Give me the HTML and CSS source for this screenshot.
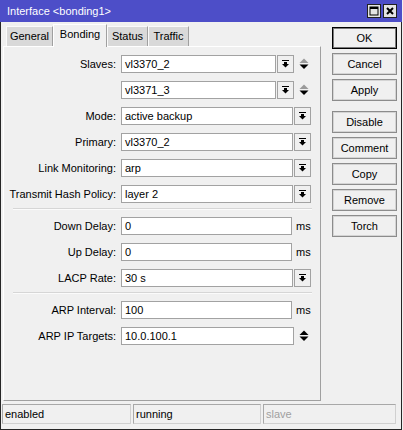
FILE: index.html
```html
<!DOCTYPE html>
<html>
<head>
<meta charset="utf-8">
<title>Interface &lt;bonding1&gt;</title>
<link rel="stylesheet" href="styles.css">
</head>
<body>
<div class="window">
  <div class="titlebar">
    <span class="title">Interface &lt;bonding1&gt;</span>
    <div class="tbtns">
      <span class="tbtn"><svg width="10" height="10" viewBox="0 0 10 10"><rect x="1" y="1" width="8" height="8" fill="none" stroke="#000" stroke-width="1"/><rect x="1" y="1" width="8" height="2" fill="#000"/></svg></span>
      <span class="tbtn"><svg width="10" height="10" viewBox="0 0 10 10"><path d="M2 2 L8 8 M8 2 L2 8" stroke="#000" stroke-width="2"/></svg></span>
    </div>
  </div>
  <div class="frame">
    <div class="main">
      <div class="left">
        <div class="tabs">
          <div class="tab t-general">General</div>
          <div class="tab t-bonding active">Bonding</div>
          <div class="tab t-status">Status</div>
          <div class="tab t-traffic">Traffic</div>
        </div>
        <div class="panel">
          <div class="group">
            <div class="row">
              <span class="label">Slaves:</span>
              <span class="input w-slave">vl3370_2</span>
              <span class="dd"><svg width="7" height="8" viewBox="0 0 7 8"><rect x="0" y="0" width="7" height="1" fill="#000"/><rect x="2" y="2" width="3" height="2" fill="#000"/><path d="M0 4 L7 4 L3.5 7.5 Z" fill="#000"/></svg></span>
              <span class="updown"><svg width="10" height="12" viewBox="0 0 10 12"><path d="M0.5 5 L9.5 5 L5 0.5 Z" fill="#9a9a9a"/><path d="M0.5 6.5 L9.5 6.5 L5 11 Z" fill="#000"/></svg></span>
            </div>
            <div class="row">
              <span class="label"></span>
              <span class="input w-slave">vl3371_3</span>
              <span class="dd"><svg width="7" height="8" viewBox="0 0 7 8"><rect x="0" y="0" width="7" height="1" fill="#000"/><rect x="2" y="2" width="3" height="2" fill="#000"/><path d="M0 4 L7 4 L3.5 7.5 Z" fill="#000"/></svg></span>
              <span class="updown"><svg width="10" height="12" viewBox="0 0 10 12"><path d="M0.5 5 L9.5 5 L5 0.5 Z" fill="#9a9a9a"/><path d="M0.5 6.5 L9.5 6.5 L5 11 Z" fill="#000"/></svg></span>
            </div>
            <div class="row">
              <span class="label">Mode:</span>
              <span class="input w-combo">active backup</span>
              <span class="dd"><svg width="7" height="8" viewBox="0 0 7 8"><rect x="0" y="0" width="7" height="1" fill="#000"/><rect x="2" y="2" width="3" height="2" fill="#000"/><path d="M0 4 L7 4 L3.5 7.5 Z" fill="#000"/></svg></span>
            </div>
            <div class="row">
              <span class="label">Primary:</span>
              <span class="input w-combo">vl3370_2</span>
              <span class="dd"><svg width="7" height="8" viewBox="0 0 7 8"><rect x="0" y="0" width="7" height="1" fill="#000"/><rect x="2" y="2" width="3" height="2" fill="#000"/><path d="M0 4 L7 4 L3.5 7.5 Z" fill="#000"/></svg></span>
            </div>
            <div class="row">
              <span class="label">Link Monitoring:</span>
              <span class="input w-combo">arp</span>
              <span class="dd"><svg width="7" height="8" viewBox="0 0 7 8"><rect x="0" y="0" width="7" height="1" fill="#000"/><rect x="2" y="2" width="3" height="2" fill="#000"/><path d="M0 4 L7 4 L3.5 7.5 Z" fill="#000"/></svg></span>
            </div>
            <div class="row">
              <span class="label">Transmit Hash Policy:</span>
              <span class="input w-combo">layer 2</span>
              <span class="dd"><svg width="7" height="8" viewBox="0 0 7 8"><rect x="0" y="0" width="7" height="1" fill="#000"/><rect x="2" y="2" width="3" height="2" fill="#000"/><path d="M0 4 L7 4 L3.5 7.5 Z" fill="#000"/></svg></span>
            </div>
          </div>
          <div class="sep"></div>
          <div class="group">
            <div class="row">
              <span class="label">Down Delay:</span>
              <span class="input w-ms">0</span>
              <span class="unit">ms</span>
            </div>
            <div class="row">
              <span class="label">Up Delay:</span>
              <span class="input w-ms">0</span>
              <span class="unit">ms</span>
            </div>
            <div class="row">
              <span class="label">LACP Rate:</span>
              <span class="input w-combo">30 s</span>
              <span class="dd"><svg width="7" height="8" viewBox="0 0 7 8"><rect x="0" y="0" width="7" height="1" fill="#000"/><rect x="2" y="2" width="3" height="2" fill="#000"/><path d="M0 4 L7 4 L3.5 7.5 Z" fill="#000"/></svg></span>
            </div>
          </div>
          <div class="sep sep2"></div>
          <div class="group">
            <div class="row">
              <span class="label">ARP Interval:</span>
              <span class="input w-ms">100</span>
              <span class="unit">ms</span>
            </div>
            <div class="row">
              <span class="label">ARP IP Targets:</span>
              <span class="input w-ip">10.0.100.1</span>
              <span class="updown ud-ip"><svg width="10" height="12" viewBox="0 0 10 12"><path d="M0.5 5 L9.5 5 L5 0.5 Z" fill="#000"/><path d="M0.5 6.5 L9.5 6.5 L5 11 Z" fill="#000"/></svg></span>
            </div>
          </div>
        </div>
      </div>
      <div class="buttons">
        <div class="btn default">OK</div>
        <div class="btn">Cancel</div>
        <div class="btn">Apply</div>
        <div class="btn gap-before">Disable</div>
        <div class="btn">Comment</div>
        <div class="btn">Copy</div>
        <div class="btn">Remove</div>
        <div class="btn">Torch</div>
      </div>
    </div>
    <div class="status">
      <div class="cell c1">enabled</div>
      <div class="cell c2">running</div>
      <div class="cell c3 dim">slave</div>
    </div>
  </div>
</div>
</body>
</html>
```
FILE: styles.css
```css
* { box-sizing: border-box; }
html, body { margin: 0; padding: 0; }
body {
  width: 403px;
  height: 430px;
  overflow: hidden;
  background: #f0f0f0;
  font-family: "Liberation Sans", Arial, sans-serif;
  font-size: 11px;
  color: #000;
}
.window {
  width: 402px;
  height: 430px;
  display: flex;
  flex-direction: column;
}
.titlebar {
  height: 22px;
  flex: none;
  background: #4d4ec8;
  color: #fff;
  display: flex;
  align-items: center;
  padding: 0 5px 0 7px;
}
.title { flex: 1; }
.tbtns { display: flex; gap: 2px; }
.tbtn {
  width: 14px;
  height: 14px;
  background: #e4e4e4;
  border: 1px solid #202020;
  display: flex;
  align-items: center;
  justify-content: center;
}
.frame {
  flex: 1;
  border: 1px solid #262626;
  border-top: 0;
  display: flex;
  flex-direction: column;
}
.main {
  display: flex;
  padding-left: 2px;
}
.left { width: 318px; flex: none; }
.tabs {
  height: 24px;
  display: flex;
  align-items: flex-end;
  padding-left: 3px;
}
.tab {
  height: 20px;
  line-height: 18px;
  text-align: center;
  background: #d9d9d9;
  border: 1px solid #fafafa;
  border-right-color: #a0a0a0;
  border-bottom: 0;
}
.tab.active {
  height: 23px;
  line-height: 18px;
  background: #f0f0f0;
  border-color: #ffffff;
  border-right-color: #a0a0a0;
  margin-bottom: -1px;
  position: relative;
  z-index: 1;
}
.t-general { width: 47px; }
.t-bonding { width: 54px; }
.t-status { width: 41px; }
.t-traffic { width: 41px; }
.panel {
  height: 355px;
  border: 1px solid #ffffff;
  border-right-color: #a0a0a0;
  border-bottom-color: #a0a0a0;
  padding-top: 8px;
}
.group {
  display: flex;
  flex-direction: column;
  gap: 8px;
}
.row {
  height: 18px;
  display: flex;
  align-items: center;
}
.label {
  width: 112px;
  text-align: right;
  margin-right: 5px;
  white-space: nowrap;
}
.input {
  height: 18px;
  line-height: 16px;
  background: #fff;
  border: 1px solid #a2a2a2;
  padding-left: 3px;
  white-space: nowrap;
}
.w-slave { width: 155px; }
.w-combo { width: 172px; }
.w-ms { width: 171px; }
.w-ip { width: 173px; }
.dd {
  width: 17px;
  height: 18px;
  margin-left: 1px;
  background: #f0f0f0;
  border: 1px solid #a2a2a2;
  display: flex;
  align-items: center;
  justify-content: center;
}
.updown {
  margin-left: 5px;
  display: flex;
  align-items: center;
}
.ud-ip { margin-left: 5px; }
.unit { margin-left: 4px; }
.sep {
  margin: 5px 0 7px 9px;
  width: 299px;
  height: 2px;
  border-top: 1px solid #d6d6d6;
  border-bottom: 1px solid #fbfbfb;
}
.sep2 { margin-top: 5px; }
.buttons {
  margin-left: 11px;
  padding-top: 5px;
  width: 65px;
  display: flex;
  flex-direction: column;
  gap: 4px;
}
.btn {
  height: 22px;
  line-height: 20px;
  text-align: center;
  background: #f0f0f0;
  border: 1px solid #8c8c8c;
  box-shadow: inset 0 0 0 1px #d4d4d4;
}
.btn.default {
  border-color: #000;
  box-shadow: inset 0 0 0 1px #7a7a7a;
}
.gap-before { margin-top: 6px; }
.status {
  margin-top: 3px;
  padding-left: 1px;
  display: flex;
  gap: 2px;
}
.cell {
  height: 20px;
  line-height: 18px;
  padding-left: 2px;
  border: 1px solid #a8a8a8;
  border-right-color: #d0d0d0;
  border-bottom-color: #d0d0d0;
}
.c1 { width: 129px; }
.c2 { width: 128px; }
.c3 { width: 133px; }
.dim { color: #a0a0a0; }
```
